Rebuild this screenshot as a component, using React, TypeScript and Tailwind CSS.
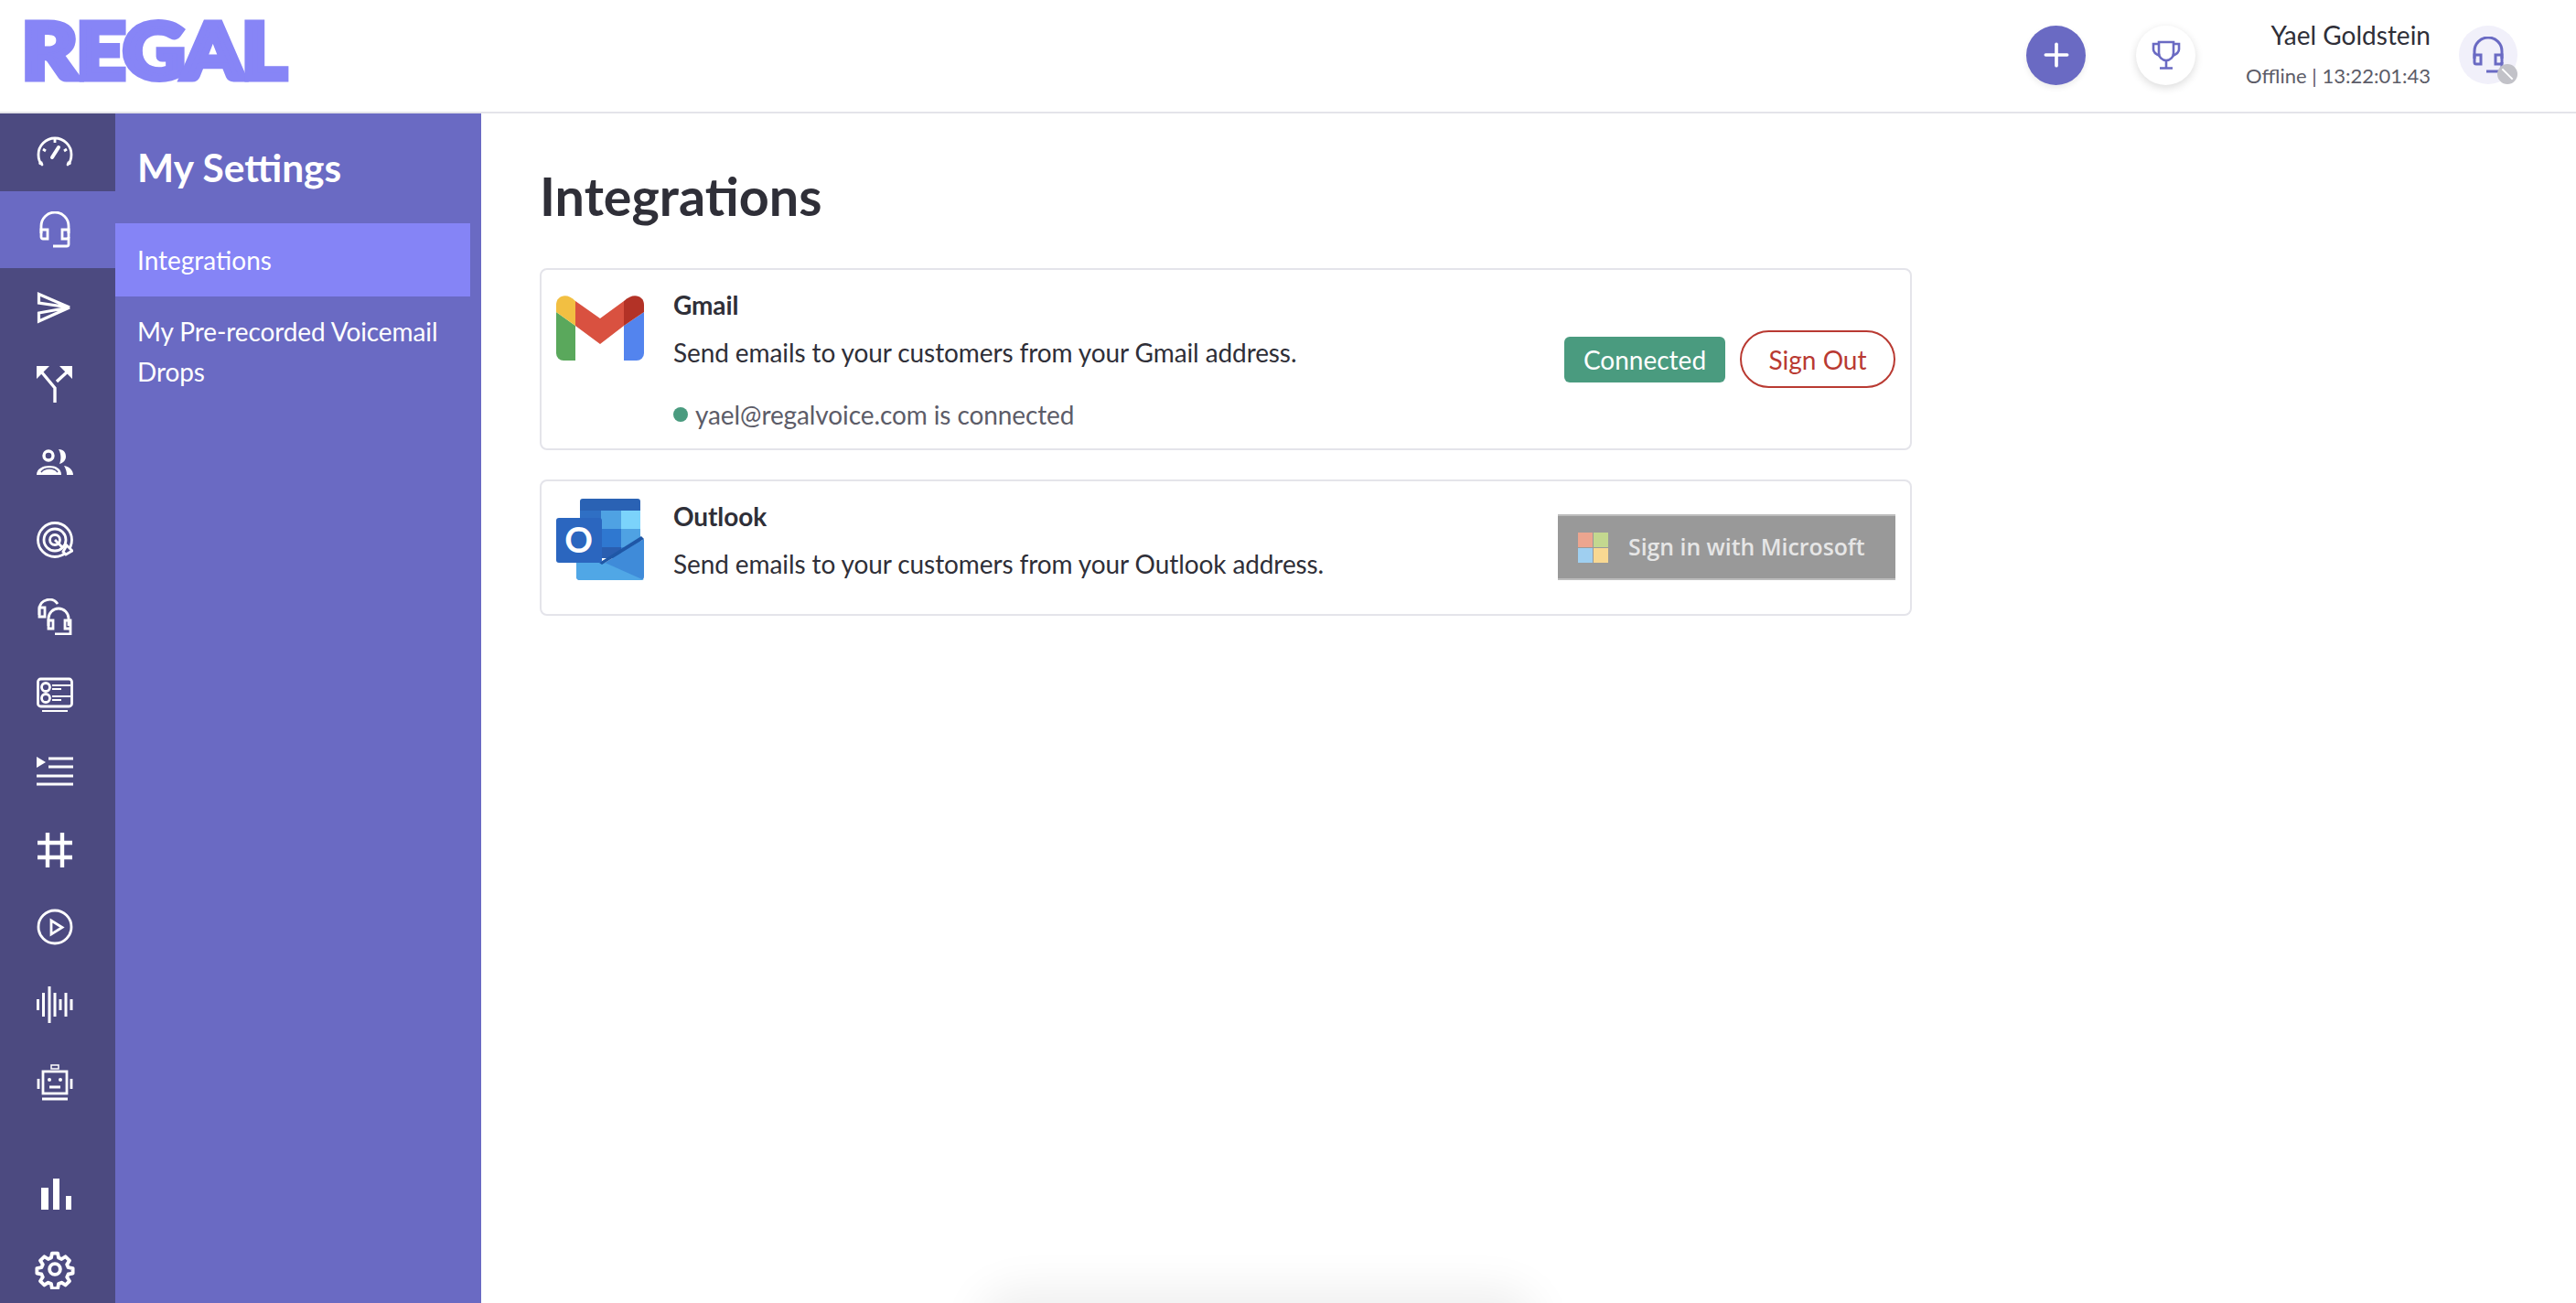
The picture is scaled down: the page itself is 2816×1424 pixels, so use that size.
import { Plus } from "lucide-react";
import type { ReactNode } from "react";

const Icon = ({ children }: { children: ReactNode }) => (
  <svg viewBox="0 0 40 40" className="w-10 h-10 text-white" fill="none" stroke="currentColor" strokeWidth="2.800">
    {children}
  </svg>
);

const HeadsetPaths = () => (
  <>
    <path d="M5 24V16a15 15 0 0 1 30 0v8" />
    <path d="M5 20h7v10H7a2 2 0 0 1-2-2z" />
    <path d="M35 20h-7v10h5a2 2 0 0 0 2-2z" />
    <path d="M35 28v8a2 2 0 0 1-2 2H18" />
  </>
);

const railIcons: ReactNode[] = [
  <>
    <path d="M6 34c-3-3-4-7-4-11a18 18 0 0 1 36 0c0 4-1 8-4 11" strokeLinecap="round" />
    <path d="M20 5v5M7 17l3 2M33 17l-3 2M2.500 33l4-1.500M37.500 33l-4-1.500" />
    <path d="M17 26l7-11" strokeWidth="4" strokeLinecap="round" />
  </>,
  <HeadsetPaths />,
  <>
    <path d="M2.500 5.500L36 20 2.500 15z" strokeWidth="3.200" />
    <path d="M36 20L2.500 35v-9z" strokeWidth="3.200" />
  </>,
  <>
    <path d="M20 40V24L5 6M22 17L35 5" strokeWidth="3.400" />
    <path d="M0 0h14L0 14zM25 0h14v14z" fill="currentColor" stroke="none" />
  </>,
  <>
    <circle cx="13" cy="13" r="5" strokeWidth="3.400" />
    <path d="M0 34c0-7 7-10 14-10s13 3 13 10z" fill="currentColor" stroke="none" />
    <path d="M5 31c2-3 5-4 9-4s7 1 9 4" stroke="#4c4a80" strokeWidth="1.500" />
    <path d="M24 6c6 0 8 4 8 8s-3 7-7 8c2-5 2-11-1-16zM30 24c6 1 10 5 10 10h-7c0-3-1-7-3-10z" fill="currentColor" stroke="none" />
  </>,
  <>
    <circle cx="20" cy="20" r="18.500" />
    <circle cx="20" cy="20" r="12" />
    <circle cx="20" cy="20" r="5.500" />
    <path d="M20 20l9 9" />
    <path d="M29 33l4-7 6 6-7 4z" fill="#4c4a80" />
  </>,
  <>
    <path d="M3 18v-7a11 11 0 0 1 20-5" />
    <path d="M3 10h6v10H3zM35 30V22a11 11 0 0 0-22 0v8" />
    <path d="M13 24h5v9h-5zM37 24h-6v9h6zM37 33v6H20" />
  </>,
  <>
    <rect x="1.500" y="3" width="37" height="30" rx="3" />
    <circle cx="10" cy="12" r="4.500" />
    <circle cx="10" cy="24" r="4.500" />
    <path d="M17 10h20M17 14h10M17 22h20M17 26h10M6 38h28" strokeWidth="2.200" />
  </>,
  <>
    <path d="M0 3l10 6-10 6z" fill="currentColor" stroke="none" />
    <path d="M13 5h27M13 14h27M0 24h40M0 33h40" strokeWidth="3" />
  </>,
  <path d="M12 1v38M28 1v38M1 12h38M1 28h38" strokeWidth="4.400" />,
  <>
    <circle cx="20" cy="20" r="18" />
    <path d="M16 13v15l12-7.500z" />
  </>,
  <path d="M1.500 14v12M7.500 7v26M14 0v40M20 7v26M26 14v12M32 7v26M38 14v12" strokeWidth="3" />,
  <>
    <rect x="16" y="1" width="8" height="4" strokeWidth="1.500" />
    <rect x="7" y="8" width="26" height="24" strokeWidth="2.800" />
    <path d="M2 16v11M38 16v11M14 25h12M6 38h28" strokeWidth="2.800" />
    <circle cx="14" cy="17" r="2" fill="currentColor" stroke="none" />
    <circle cx="26" cy="17" r="2" fill="currentColor" stroke="none" />
  </>,
];

const GmailLogo = () => (
  <svg viewBox="0 0 96 72" className="w-24 h-[72px] shrink-0">
    <path d="M0 19L21 34v38H8a8 8 0 0 1-8-8z" fill="#5aa85c" />
    <path d="M96 19L74 34v38h14a8 8 0 0 0 8-8z" fill="#5384ee" />
    <path d="M21 7L48 26 74 7v27L48 54 21 34z" fill="#d95140" />
    <path d="M0 19V11C0 1 12-3 21 7v27z" fill="#f2bf42" />
    <path d="M96 19V11C96 1 84-3 74 7v27z" fill="#b33226" />
  </svg>
);

const OutlookLogo = () => (
  <svg viewBox="0 0 96 89" className="w-24 h-[89px] shrink-0">
    <path d="M26 3a3 3 0 0 1 3-3h60a3 3 0 0 1 3 3v10H26z" fill="#2a62b4" />
    <rect x="26" y="13" width="23" height="20" fill="#2f6fc4" />
    <rect x="49" y="13" width="22" height="20" fill="#4fa2e3" />
    <rect x="71" y="13" width="21" height="20" fill="#7bd3fb" />
    <rect x="26" y="33" width="23" height="20" fill="#2a65b8" />
    <rect x="49" y="33" width="22" height="20" fill="#2f78d0" />
    <rect x="71" y="33" width="21" height="20" fill="#4fa2e3" />
    <rect x="26" y="53" width="45" height="12" fill="#2a5eb0" />
    <rect x="71" y="53" width="21" height="12" fill="#3b86d6" />
    <path d="M96 44L50 72 22 56v29a4 4 0 0 0 4 4h66a4 4 0 0 0 4-4z" fill="#3f8bd9" />
    <path d="M22 56L96 89H26a4 4 0 0 1-4-4z" fill="#50a7e6" />
    <path d="M93 41l3 3L50 72l-3-2z" fill="#1f57a6" />
    <rect y="21" width="50" height="49" rx="3" fill="#2b66bf" />
    <text x="24.500" y="59" textAnchor="middle" fill="#fff" className="font-['Lato'] font-bold text-[38px]">O</text>
  </svg>
);

export default function App() {
  return (
    <div className="relative h-screen overflow-hidden bg-white font-['Lato',sans-serif] text-[#2f2f38]">
      <header className="h-[124px] flex items-center justify-between border-b-2 border-[#e4e4ea] pl-[24px] pr-[64px]">
        <div className="text-[84px] leading-none font-black tracking-[-0.012em] text-[#8785f6] [-webkit-text-stroke:7px_#8785f6] origin-left scale-x-[1.11] -mt-[15px]">
          REGAL
        </div>
        <div className="flex items-center -mt-[2px]">
          <div className="w-[65px] h-[65px] rounded-full bg-[#6a6ac3] flex items-center justify-center shadow-[0_3px_6px_rgba(0,0,0,0.08)]">
            <Plus className="w-10 h-10 text-white" strokeWidth={2.2} />
          </div>
          <div className="ml-[55px] w-[65px] h-[65px] rounded-full bg-white flex items-center justify-center shadow-[0_3px_10px_rgba(0,0,0,0.14)]">
            <svg viewBox="0 0 32 32" className="w-8 h-8" fill="none" stroke="#6a6ac3" strokeWidth="2.600">
              <path d="M8 2h16v12a8 8 0 0 1-16 0z" />
              <path d="M8 4H2v6c0 3 2 5 7 7M24 4h6v6c0 3-2 5-7 7M16 22v8M9 30.500h14" />
            </svg>
          </div>
          <div className="ml-[55px] flex flex-col items-end">
            <div className="text-[28px] leading-[36px] -mt-[3px] text-[#2f2f38]">Yael Goldstein</div>
            <div className="text-[22px] leading-[30px] mt-[12px] text-[#5c5c68]">Offline&nbsp;|&nbsp;13:22:01:43</div>
          </div>
          <div className="relative ml-[31px] w-[64px] h-[64px] rounded-full bg-[#f1f0fa] flex items-center justify-center">
            <svg viewBox="0 0 40 40" className="w-10 h-10 text-[#6a6ac3]" fill="none" stroke="currentColor" strokeWidth="3">
              <HeadsetPaths />
            </svg>
            <div className="absolute left-[42px] top-[42px] w-[22px] h-[22px] rounded-full bg-[#c2c2c8] flex items-center justify-center">
              <div className="w-[16px] h-[2px] bg-white rotate-45" />
            </div>
          </div>
        </div>
      </header>

      <div className="flex h-[1300px]">
        <nav className="w-[126px] shrink-0 bg-[#4c4a80] overflow-hidden">
          {railIcons.map((icon, i) => (
            <div key={i} className={`h-[84.700px] pl-10 flex items-center ${i === 1 ? "bg-[#6a6ac3]" : ""}`}>
              <Icon>{icon}</Icon>
            </div>
          ))}
          <div className="mt-[38px] h-[84px] pl-10 flex items-center">
            <Icon>
              <path d="M5 13h8v24H5zM18 3h7v34h-7zM32 22h6v15h-6z" fill="currentColor" stroke="none" />
            </Icon>
          </div>
          <div className="h-[80px] pl-[38px] flex items-center">
            <svg viewBox="0 0 24 24" className="w-[44px] h-[44px] text-white" fill="none" stroke="currentColor" strokeWidth="2.100" strokeLinejoin="round">
              <circle cx="12" cy="12" r="3.200" />
              <path d="M10.300 2.500h3.400l.5 2.700 1.800.8 2.300-1.500 2.400 2.400-1.500 2.300.8 1.800 2.700.5v3l-2.700.5-.8 1.800 1.500 2.300-2.400 2.400-2.300-1.500-1.800.8-.5 2.700h-3.400l-.5-2.700-1.800-.8-2.300 1.500-2.400-2.400 1.500-2.300-.8-1.800-2.700-.5v-3l2.700-.5.8-1.800-1.500-2.300 2.400-2.400 2.300 1.500 1.800-.8z" />
            </svg>
          </div>
        </nav>

        <aside className="w-[400px] shrink-0 bg-[#6a6ac3] text-white pr-3">
          <h2 className="pl-[24px] pt-[31px] text-[42.500px] leading-[56px] font-bold">My Settings</h2>
          <div className="mt-[33px] h-[80px] pl-[24px] flex items-center bg-[#8584f6] text-[28px]">Integrations</div>
          <div className="mt-[16px] pl-[24px] text-[28px] leading-[44px] tracking-[-0.1px]">My Pre-recorded Voicemail Drops</div>
        </aside>

        <main className="w-[1565px] pl-16 pt-[55px]">
          <h1 className="text-[57.500px] leading-[70px] font-bold">Integrations</h1>
          <div className="mt-[44px] h-[199px] w-[1500px] rounded-lg border-2 border-[#e4e4ea] pl-[16px] pr-4 pt-[27px] flex">
            <GmailLogo />
            <div className="ml-8 -mt-[6px] flex-1 text-[28px] tracking-[-0.1px]">
              <div className="font-bold leading-[34px]">Gmail</div>
              <div className="mt-[18px] leading-[34px]">Send emails to your customers from your Gmail address.</div>
              <div className="mt-[34px] leading-[34px] flex items-center text-[#5c5c68]">
                <span className="w-4 h-4 rounded-full bg-[#4a9b7f] mr-2" />
                yael@regalvoice.com is connected
              </div>
            </div>
            <div className="flex items-start gap-4 mt-[39px]">
              <div className="mt-[7px] w-[176px] h-[50px] rounded-md bg-[#4a9b7f] text-white text-[28px] flex items-center justify-center">Connected</div>
              <div className="w-[170px] h-[63px] rounded-full border-2 border-[#b93a32] text-[#b93a32] text-[28px] flex items-center justify-center">Sign Out</div>
            </div>
          </div>
          <div className="mt-[32px] h-[149px] w-[1500px] rounded-lg border-2 border-[#e4e4ea] pl-[16px] pr-4 pt-[19px] flex">
            <OutlookLogo />
            <div className="ml-8 mt-[2px] flex-1 text-[28px] tracking-[-0.1px]">
              <div className="font-bold leading-[34px]">Outlook</div>
              <div className="mt-[18px] leading-[34px]">Send emails to your customers from your Outlook address.</div>
            </div>
            <div className="mt-[17px] w-[369px] h-[72px] bg-[#999999] border-y-2 border-[#bcbcbc] flex items-center pl-[22px]">
              <div className="grid grid-cols-2 gap-[1px] w-[33px] h-[33px]">
                <span className="bg-[#eca58f]" />
                <span className="bg-[#c3d88f]" />
                <span className="bg-[#9fcff0]" />
                <span className="bg-[#f8d892]" />
              </div>
              <span className="ml-[22px] font-['Open_Sans',sans-serif] font-semibold text-[24.800px] text-[#e6e6e6]">Sign in with Microsoft</span>
            </div>
          </div>
        </main>
      </div>

      <div className="absolute left-[1090px] top-[1430px] w-[570px] h-10 rounded-full shadow-[0_0_50px_20px_rgba(0,0,0,0.07)]" />
    </div>
  );
}
